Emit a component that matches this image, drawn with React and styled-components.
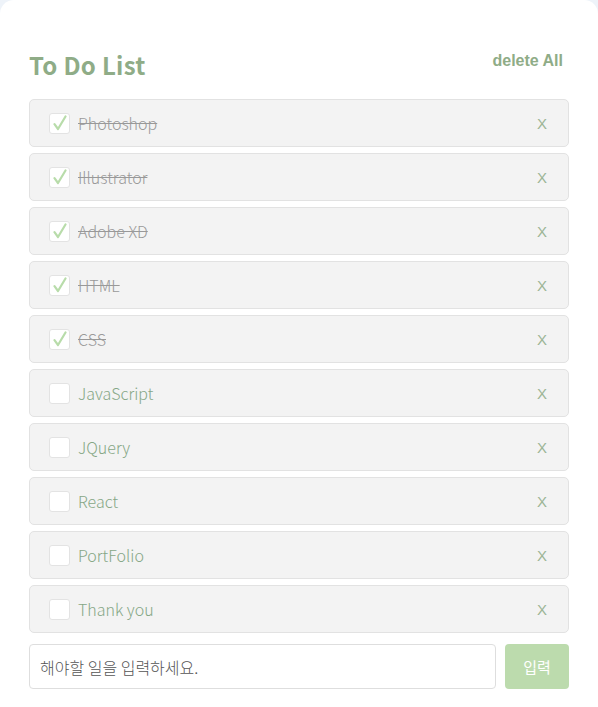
import styled, { createGlobalStyle } from "styled-components";

const GlobalStyle = createGlobalStyle`
  html, body {
    margin: 0;
    padding: 0;
    background: #eef3f9;
  }
  * {
    box-sizing: border-box;
  }
`;

const Card = styled.div`
  height: 100vh;
  background: #fff;
  border-radius: 14px 14px 0 0;
  padding: 46px 29px 0 29px;
  font-family: "Noto Sans CJK KR", "Noto Sans", sans-serif;
`;

const Header = styled.div`
  display: flex;
  justify-content: space-between;
  align-items: center;
  height: 36px;
  margin-bottom: 17px;
`;

const Title = styled.h1`
  margin: 0;
  font-size: 24px;
  font-weight: 700;
  color: #8fac87;
  letter-spacing: 0.3px;
`;

const DeleteAll = styled.button`
  border: none;
  background: none;
  padding: 0;
  margin-right: 6px;
  margin-top: -6px;
  font-family: "Liberation Sans", Arial, sans-serif;
  font-weight: 700;
  font-size: 16px;
  color: #8fac87;
  cursor: pointer;
`;

const List = styled.ul`
  list-style: none;
  margin: 0;
  padding: 0;
  display: flex;
  flex-direction: column;
  gap: 6px;
`;

const Item = styled.li`
  display: flex;
  align-items: center;
  height: 48px;
  padding: 0 19px;
  background: #f3f3f3;
  border: 1px solid #e2e2e2;
  border-radius: 5px;
`;

const Check = styled.span`
  width: 21px;
  height: 21px;
  flex: none;
  background: #fff;
  border: 1px solid #e3e3e3;
  border-radius: 3px;
  display: flex;
  align-items: center;
  justify-content: center;
  margin-right: 8px;
`;

const Label = styled.span`
  flex: 1;
  font-size: 16px;
  font-weight: 300;
  color: ${(p) => (p.$done ? "#999" : "#86a786")};
  text-decoration: ${(p) => (p.$done ? "line-through" : "none")};
  text-decoration-color: #999;
`;

const Remove = styled.button`
  border: none;
  background: none;
  padding: 0;
  margin-right: 2px;
  font-family: "Liberation Sans", Arial, sans-serif;
  font-size: 15px;
  color: #9cb596;
  cursor: pointer;
`;

const Form = styled.form`
  display: flex;
  gap: 9px;
  margin-top: 11px;
`;

const Input = styled.input`
  flex: 1;
  height: 45px;
  border: 1px solid #dedede;
  border-radius: 4px;
  padding: 0 10px;
  font-family: "Noto Sans CJK KR", "Noto Sans", sans-serif;
  font-size: 16px;
  font-weight: 300;
  color: #555;
  outline: none;
  &::placeholder {
    color: #555;
  }
`;

const Submit = styled.button`
  width: 64px;
  height: 45px;
  border: none;
  border-radius: 4px;
  background: #bcdbad;
  color: #fff;
  font-family: "Noto Sans CJK KR", "Noto Sans", sans-serif;
  font-size: 15px;
  cursor: pointer;
`;

const todos = [
  { text: "Photoshop", done: true },
  { text: "Illustrator", done: true },
  { text: "Adobe XD", done: true },
  { text: "HTML", done: true },
  { text: "CSS", done: true },
  { text: "JavaScript", done: false },
  { text: "JQuery", done: false },
  { text: "React", done: false },
  { text: "PortFolio", done: false },
  { text: "Thank you", done: false },
];

const CheckMark = () => (
  <svg width="16" height="16" viewBox="0 0 16 16">
    <path
      d="M2.5 9.2 L6 14 L13.5 1.5"
      fill="none"
      stroke="#b8dcaa"
      strokeWidth="2.2"
      strokeLinecap="round"
      strokeLinejoin="round"
    />
  </svg>
);

export default function App() {
  return (
    <>
      <GlobalStyle />
      <Card>
        <Header>
          <Title>To Do List</Title>
          <DeleteAll>delete All</DeleteAll>
        </Header>
        <List>
          {todos.map((t) => (
            <Item key={t.text}>
              <Check>{t.done && <CheckMark />}</Check>
              <Label $done={t.done}>{t.text}</Label>
              <Remove>X</Remove>
            </Item>
          ))}
        </List>
        <Form onSubmit={(e) => e.preventDefault()}>
          <Input placeholder="해야할 일을 입력하세요." />
          <Submit type="submit">입력</Submit>
        </Form>
      </Card>
    </>
  );
}
